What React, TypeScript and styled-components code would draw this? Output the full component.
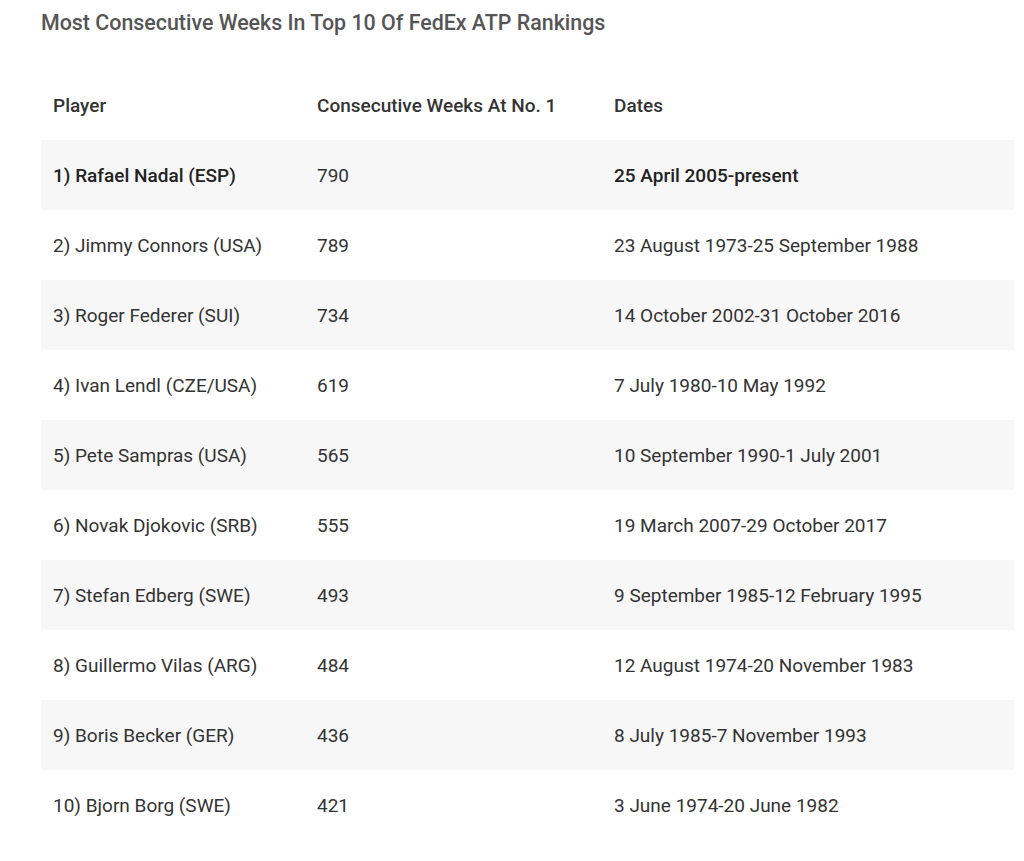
import React from "react";
import styled, { createGlobalStyle } from "styled-components";

const Global = createGlobalStyle`
  html, body { margin: 0; padding: 0; background: #fff; }
  body { font-family: Roboto, "Liberation Sans", sans-serif; }
`;

const Page = styled.div`
  padding: 8px 10px 0 41px;
`;

const Title = styled.h2`
  margin: 0;
  font-size: 21.4px;
  line-height: 29px;
  font-weight: 500;
  color: #555;
`;

const Table = styled.table`
  margin-top: 33px;
  width: 973px;
  border-collapse: collapse;
  color: #333;
  font-size: 19px;
`;

const Row = styled.tr<{ $shade?: boolean }>`
  height: 70px;
  background: ${(p) => (p.$shade ? "#f7f7f7" : "#fff")};
`;

const Th = styled.th<{ $w: number }>`
  width: ${(p) => p.$w}px;
  text-align: left;
  padding: 0 12px;
  font-weight: 500;
  color: #333;
`;

const Td = styled.td<{ $strong?: boolean }>`
  padding: 0 12px;
  font-weight: ${(p) => (p.$strong ? 500 : 400)};
  color: ${(p) => (p.$strong ? "#222" : "#333")};
`;

const data: [string, string, string][] = [
  ["1) Rafael Nadal (ESP)", "790", "25 April 2005-present"],
  ["2) Jimmy Connors (USA)", "789", "23 August 1973-25 September 1988"],
  ["3) Roger Federer (SUI)", "734", "14 October 2002-31 October 2016"],
  ["4) Ivan Lendl (CZE/USA)", "619", "7 July 1980-10 May 1992"],
  ["5) Pete Sampras (USA)", "565", "10 September 1990-1 July 2001"],
  ["6) Novak Djokovic (SRB)", "555", "19 March 2007-29 October 2017"],
  ["7) Stefan Edberg (SWE)", "493", "9 September 1985-12 February 1995"],
  ["8) Guillermo Vilas (ARG)", "484", "12 August 1974-20 November 1983"],
  ["9) Boris Becker (GER)", "436", "8 July 1985-7 November 1993"],
  ["10) Bjorn Borg (SWE)", "421", "3 June 1974-20 June 1982"],
];

export default function App() {
  return (
    <Page>
      <Global />
      <Title>Most Consecutive Weeks In Top 10 Of FedEx ATP Rankings</Title>
      <Table>
        <thead>
          <Row>
            <Th $w={240}>Player</Th>
            <Th $w={273}>Consecutive Weeks At No. 1</Th>
            <Th $w={388}>Dates</Th>
          </Row>
        </thead>
        <tbody>
          {data.map((r, i) => (
            <Row key={i} $shade={i % 2 === 0}>
              <Td $strong={i === 0}>{r[0]}</Td>
              <Td>{r[1]}</Td>
              <Td $strong={i === 0}>{r[2]}</Td>
            </Row>
          ))}
        </tbody>
      </Table>
    </Page>
  );
}
